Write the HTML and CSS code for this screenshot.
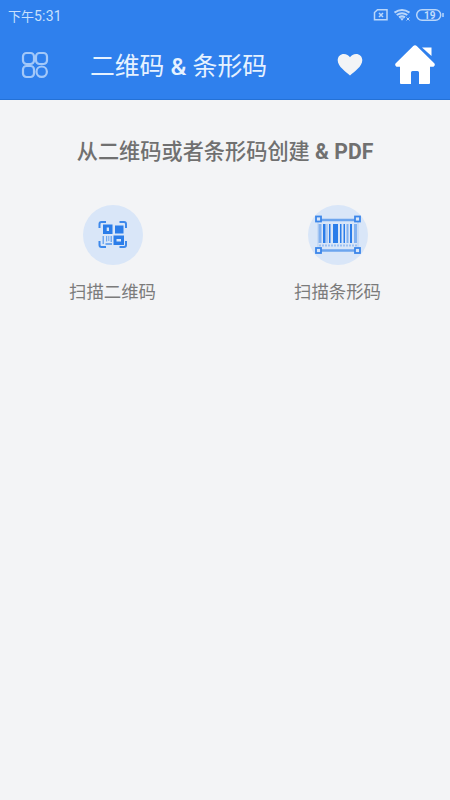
FILE: index.html
```
<!DOCTYPE html>
<html lang="zh-CN">
<head>
    <meta charset="UTF-8">
    <meta name="viewport" content="width=device-width, initial-scale=1.0">
    <title>二维码 &amp; 条形码</title>
    <link rel="stylesheet" href="styles.css">
</head>
<body>

<header>
    <div class="status-bar">
        <span class="time">下午<span class="digits">5:31</span></span>
        <!-- sim, wifi, battery -->
        <svg class="status-icons" width="72" height="14" viewBox="0 0 72 14" fill="none" stroke="#b9d6fa" stroke-width="1.5">
            <path d="M4.500 1.700H14v10H1.500V4.500z"/>
            <path d="M6 5l4 4M10 5l-4 4"/>
            <path d="M21.500 4.600q7.500-5.200 15 0M23.700 7q5.300-3.600 10.600 0M26 9.300q3-1.800 6 0" stroke-width="2.100"/>
            <path d="M27 10.300h4L29 12.800z" fill="#b9d6fa" stroke="none"/>
            <path d="M33.500 9.500l3 3M36.500 9.500l-3 3" stroke-width="1"/>
            <rect x="43.700" y="1.700" width="24" height="10.600" rx="5.300"/>
            <path d="M70 5v4" stroke-width="1.500"/>
            <text x="51" y="10.500" class="battery">19</text>
        </svg>
    </div>
    <div class="toolbar">
        <svg class="menu-icon" width="28" height="28" viewBox="0 0 28 28" fill="none" stroke="#a3c8f9" stroke-width="2.200">
            <rect x="2" y="2" width="11" height="11" rx="3.500"/>
            <rect x="15" y="2" width="11" height="11" rx="3.500"/>
            <rect x="2" y="15" width="11" height="11" rx="3.500"/>
            <circle cx="20.700" cy="20.700" r="5.200"/>
        </svg>
        <h1>二维码 <b>&amp;</b> 条形码</h1>
        <svg class="heart" width="26" height="24" viewBox="0 0 26 24" fill="#f3f4f6">
            <path d="M13 22.500C9 18.800 0.700 13.500 0.700 7.200C0.700 3.300 3.500 0.900 6.900 0.900C9.500 0.900 11.800 2.200 13 4.200C14.200 2.200 16.500 0.900 19.100 0.900C22.500 0.900 25.300 3.300 25.300 7.200C25.300 13.500 17 18.800 13 22.500z"/>
        </svg>
        <svg class="home" width="40" height="40" viewBox="0 0 40 40" fill="#fff">
            <path d="M18 1.200q2-1.700 4 0L39.500 18.500q1 2-1 3.200H35V38q0 1-1 1H24V27.500q0-1.500-1.500-1.500h-5q-1.500 0-1.500 1.500V39H6q-1 0-1-1V21.700H1.500Q-.500 20.500.500 18.500z"/>
            <path d="M27 2.500h9.500v8.500z"/>
        </svg>
    </div>
</header>

<main>
    <h2>从二维码或者条形码创建 <b>&amp; PDF</b></h2>
    <div class="options">
        <div class="option">
            <div class="circle">
                <svg width="30" height="30" viewBox="0 0 30 30" fill="#2b7de9">
                    <path d="M1.500 8V4q0-2 2-2H8M21.500 2H26q2 0 2 2v4M1.500 21v4q0 2 2 2H8M21.500 27H26q2 0 2-2v-4" fill="none" stroke="#3c88eb" stroke-width="2"/>
                    <path d="M5 4.500h9.500V14H5zM8.700 7.500v3.500h2.300V7.500z" fill-rule="evenodd"/>
                    <rect x="17" y="5.500" width="8.500" height="8"/>
                    <path d="M15.500 15.500H26V25H15.500zM18.500 19v2.500h4.500V19z" fill-rule="evenodd"/>
                    <path d="M4.500 16H6v8H4.500zM12.500 16H14v6h-1.500zM8 16h1.200v5.500H8zM10.300 16h1v5h-1zM7.500 23H14v2H7.500z" fill="#72a9ef"/>
                </svg>
            </div>
            <span>扫描二维码</span>
        </div>
        <div class="option">
            <div class="circle">
                <svg width="46" height="40" viewBox="0 0 46 40" fill="#2b7de9">
                    <path d="M6 5h34M6 35.500h34" stroke="#6ca5ee" stroke-width="2.500"/>
                    <path d="M3 5v29M43 5v29" stroke="#b5d0f3" stroke-width="1"/>
                    <g fill="#d9e6f8" stroke="#3b86e9" stroke-width="1.800">
                        <rect x="1" y="1.500" width="5" height="5"/>
                        <rect x="40" y="1.500" width="5" height="5"/>
                        <rect x="1" y="33" width="5" height="5"/>
                        <rect x="40" y="33" width="5" height="5"/>
                    </g>
                    <path d="M8 9h2.500v19H8zM14 9h1.500v19H14zM18 9h5v19h-5zM25 9h1.500v19H25zM28.500 9H30v19h-1.500zM35 9h2v19h-2z"/>
                    <path d="M3.500 9h3v19h-3zM11.500 9h1v19h-1zM31.500 9h2v19h-2zM39 9h3v19h-3z" fill="#83b2f0"/>
                    <path d="M4 30.500h38" stroke="#9dc1f2" stroke-width="2" stroke-dasharray="2 1"/>
                </svg>
            </div>
            <span>扫描条形码</span>
        </div>
    </div>
</main>

</body>
</html>
```
FILE: styles.css
```
* {
    box-sizing: border-box;
}

body {
    margin: 0;
    min-height: 100vh;
    background-color: #f3f4f6;
    font-family: Roboto, "Noto Sans CJK SC", sans-serif;
}

header {
    height: 100px;
    background-color: #2f80ed;
    border-bottom: 1px solid #2471d6;
}

.status-bar {
    display: flex;
    align-items: center;
    justify-content: space-between;
    height: 30px;
    padding: 0 5px 0 8px;
}

.time {
    font-size: 13px;
    color: #c9e0fc;
}

.digits {
    font-size: 14px;
    letter-spacing: 0.2px;
}

.battery {
    font-size: 10px;
    font-weight: bold;
    fill: #c3dcfb;
    stroke: none;
}

.toolbar {
    display: flex;
    align-items: center;
    height: 70px;
    padding: 0 15px 0 21px;
}

h1 {
    flex: 1;
    margin: 0 0 0 41px;
    padding-top: 4px;
    font-size: 24.8px;
    font-weight: normal;
    line-height: 36px;
    white-space: nowrap;
    color: #e6f2ff;
}

h1 b {
    font-weight: 500;
}

.heart {
    margin-right: 32px;
}

main {
    padding-top: 36px;
}

h2 {
    margin: 0;
    font-size: 21.2px;
    font-weight: 500;
    line-height: 32px;
    text-align: center;
    color: #707070;
}

h2 b {
    font-weight: bold;
}

.options {
    display: grid;
    grid-template-columns: 1fr 1fr;
    margin-top: 37px;
}

.option {
    display: flex;
    flex-direction: column;
    align-items: center;
    font-size: 17.4px;
    line-height: 26px;
    color: #7b7b7b;
}

.circle {
    display: flex;
    align-items: center;
    justify-content: center;
    width: 60px;
    height: 60px;
    margin-bottom: 14px;
    border-radius: 50%;
    background-color: #d9e6f8;
}
```
